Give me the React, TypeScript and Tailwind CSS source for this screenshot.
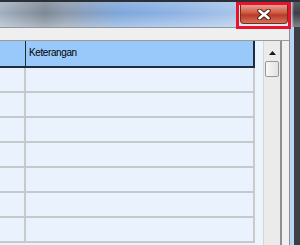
import React from 'react';

const rows = [0, 1, 2, 3, 4, 5, 6];

const CloseButton: React.FC = () => {
  return (
    <div className="absolute left-[236px] top-0 w-[55px] h-[27px] border-[3px] border-[#e8132b] bg-[#dfe6ee] flex items-start justify-end">
      <div className="w-[48px] h-[19px] rounded-b-[4px] border border-t-0 border-[#7a2a1e] bg-[linear-gradient(to_bottom,#e5a08f_0%,#d0563f_45%,#b83a25_55%,#d4705a_100%)] flex items-center justify-center">
        <svg width="14" height="11" viewBox="0 0 14 11">
          <path d="M2.5 1.8 L11.5 9.2 M11.5 1.8 L2.5 9.2" stroke="#4a1a12" strokeWidth="4.4" strokeLinecap="round" />
          <path d="M2.5 1.8 L11.5 9.2 M11.5 1.8 L2.5 9.2" stroke="#ffffff" strokeWidth="2.6" strokeLinecap="round" />
        </svg>
      </div>
    </div>
  );
};

const ScrollBar: React.FC = () => {
  return (
    <div className="w-[19px] flex flex-col bg-[#ebebeb] border-l border-[#d6d6d6] border-r-2 border-r-[#8f8f8f]">
      <div className="h-[20px] flex items-center justify-center pt-[4px]">
        <svg width="7" height="4" viewBox="0 0 7 4">
          <path d="M0 4 L3.5 0 L7 4 Z" fill="#1a1a1a" />
        </svg>
      </div>
      <div className="mx-[1px] h-[16px] rounded-[2px] border border-[#979797] bg-[linear-gradient(to_right,#f8f8f8,#e2e2e2)]" />
    </div>
  );
};

export default function App() {
  return (
    <div className="w-[300px] h-[245px] overflow-hidden flex flex-col bg-[#f0f0f0] font-['Liberation_Sans',Arial,sans-serif]">
      <div className="relative h-[27px] shrink-0 border-t-2 border-[#2b3038] bg-[linear-gradient(to_right,#a3b0c0_0%,#7d8896_15%,#8a99ac_22%,#7ea7dc_40%,#8fb4e4_60%,#aac5e9_80%,#b6cbe6_96%,#b9d5f2_97%,#3b3f46_98%)]">
        <div className="absolute inset-0 bg-[linear-gradient(to_bottom,rgba(255,255,255,0.15)_0%,rgba(255,255,255,0)_45%,rgba(255,255,255,0.35)_100%)]" />
        <CloseButton />
      </div>

      <div className="flex-1 flex min-h-0">
        <div className="w-[290px] flex flex-col border-r border-[#8c9096]">
          <div className="h-[13px] shrink-0 bg-[#efefef] border-t border-[#8e98a4]" />
          <div className="flex-1 flex border-t border-[#9a9a9a] min-h-0">
            <div className="w-[255px] flex flex-col bg-[#eaf2fe]">
              <div className="h-[27px] shrink-0 flex bg-[#99c9fa] border-b-2 border-r-2 border-[#1e2c3c]">
                <div className="w-[26px] border-r border-[#1e2c3c]" />
                <div className="flex-1 flex items-center pl-[3px] pb-[3px] text-[10px] tracking-[-0.4px] text-black">
                  Keterangan
                </div>
              </div>
              {rows.map((r) => (
                <div key={r} className="h-[25px] shrink-0 flex border-b-2 border-[#c6c9cc]">
                  <div className="w-[26px] border-r-2 border-[#c8cacc]" />
                  <div className="flex-1 border-r-2 border-[#c8cacc]" />
                </div>
              ))}
            </div>
            <div className="w-[8px] bg-[#eef4fc]" />
            <ScrollBar />
            <div className="flex-1 bg-[#f0f0f0]" />
          </div>
        </div>
        <div className="w-[4px] bg-[#b9d5f2]" />
        <div className="flex-1 bg-[#3b3f46]" />
      </div>
    </div>
  );
}
